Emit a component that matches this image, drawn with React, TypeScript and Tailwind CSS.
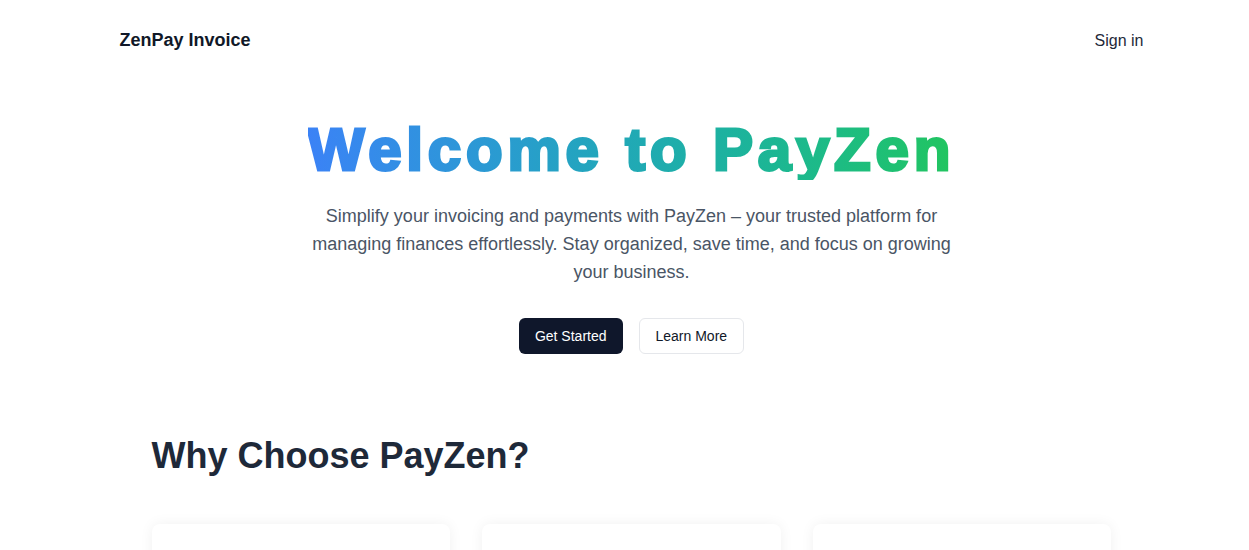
import React from "react";

const FeatureCard: React.FC<{ title: string; text: string }> = ({ title, text }) => (
  <div className="bg-white rounded-lg shadow-[0_0_14px_rgba(0,0,0,0.06)] p-6 h-[180px]">
    <div className="opacity-[0.05]">
      <h3 className="text-xl font-bold text-gray-800">{title}</h3>
      <p className="mt-3 text-base text-gray-600">{text}</p>
    </div>
  </div>
);

export default function App() {
  return (
    <div
      className="min-h-screen bg-white pl-[14px]"
      style={{ fontFamily: '"Liberation Sans", Arial, sans-serif' }}
    >
      <div className="max-w-screen-lg mx-auto">
        <header className="h-20 flex items-center justify-between">
          <span className="text-lg font-bold text-gray-900">ZenPay Invoice</span>
          <a className="text-base text-gray-800 pt-px">Sign in</a>
        </header>

        <section className="pt-10 flex flex-col items-center text-center">
          <h1 className="text-6xl leading-none font-extrabold tracking-[0.08em] [-webkit-text-stroke:3px_transparent] bg-linear-to-r from-[#3b82f6] to-[#22c55e] bg-clip-text text-transparent">
            Welcome to PayZen
          </h1>
          <p className="mt-[22px] max-w-2xl text-lg leading-7 text-gray-600">
            Simplify your invoicing and payments with PayZen – your trusted platform for
            managing finances effortlessly. Stay organized, save time, and focus on growing
            your business.
          </p>
          <div className="mt-8 flex gap-4">
            <button className="h-9 px-4 rounded-md bg-slate-900 text-white text-sm">
              Get Started
            </button>
            <button className="h-9 px-4 rounded-md border border-gray-200 bg-white text-gray-900 text-sm">
              Learn More
            </button>
          </div>
        </section>

        <section className="px-8 mt-[82px] pb-16">
          <h2 className="text-4xl leading-10 font-bold text-gray-800">Why Choose PayZen?</h2>
          <div className="mt-12 grid grid-cols-3 gap-8">
            <FeatureCard
              title="Easy Invoicing"
              text="Create and send professional invoices in seconds."
            />
            <FeatureCard
              title="Secure Payments"
              text="Accept payments safely with trusted providers."
            />
            <FeatureCard
              title="Real-time Tracking"
              text="Monitor payments and outstanding balances instantly."
            />
          </div>
        </section>
      </div>
    </div>
  );
}
